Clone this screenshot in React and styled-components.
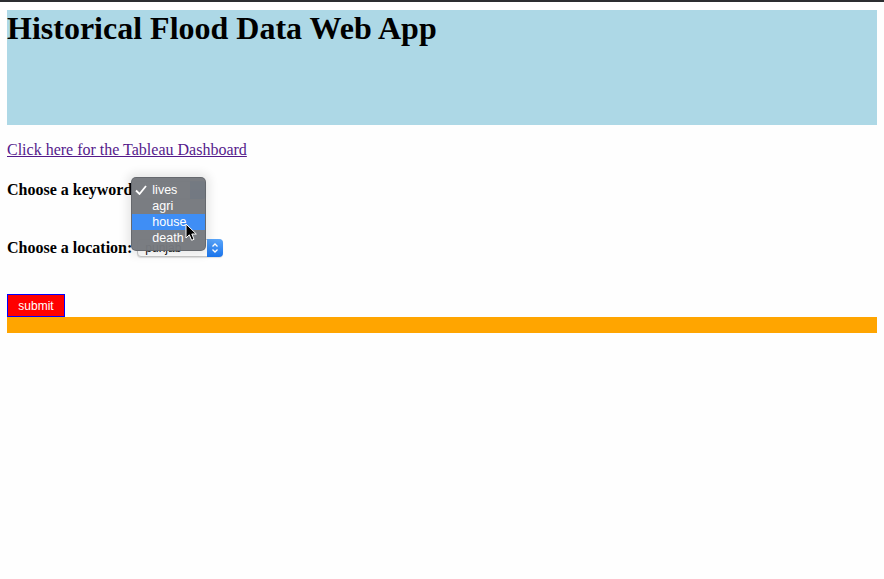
import styled, { createGlobalStyle } from "styled-components"

const GlobalStyle = createGlobalStyle`
  html, body {
    margin: 0;
    padding: 0;
    background: #fefefe;
  }
  body {
    font-family: "Liberation Serif", "Times New Roman", serif;
  }
`

const TopBar = styled.div`
  height: 2px;
  background-color: #2b2d30;
`

const Main = styled.div`
  padding: 8px 7px 0;
`

const Header = styled.div`
  height: 115px;
  background-color: #add8e6;
`

const Title = styled.h1`
  margin: 0;
  font-size: 32px;
  font-weight: bold;
  line-height: 37px;
  color: #000;
`

const LinkLine = styled.p`
  margin: 16px 0;
  font-size: 16px;
  line-height: 18px;
`

const Link = styled.a`
  color: #551a8b;
  text-decoration: underline;
`

const Form = styled.form`
  display: flex;
  flex-direction: column;
  align-items: flex-start;
`

const Row = styled.div`
  display: flex;
  align-items: center;
  height: 30px;
  margin-bottom: ${(p) => p.$gap || 0}px;
`

const Label = styled.label`
  font-size: 16px;
  font-weight: bold;
  color: #000;
  margin-right: ${(p) => p.$space}px;
`

const Field = styled.div`
  position: relative;
`

const Select = styled.div`
  position: relative;
  width: ${(p) => p.$width}px;
  height: 18px;
  box-sizing: border-box;
  border: 1px solid #c9c9c9;
  border-radius: 4px;
  background: #fff;
  box-shadow: 0 1px 1px rgba(0, 0, 0, 0.12);
  font-family: "Liberation Sans", Arial, sans-serif;
  font-size: 12px;
  line-height: 16px;
  padding-left: 7px;
  color: #111;
`

const Stepper = styled.span`
  position: absolute;
  right: -1px;
  top: -1px;
  bottom: -1px;
  width: 16px;
  border-radius: 0 4px 4px 0;
  background: linear-gradient(#5aa6fb, #1a74ec);
  display: flex;
  align-items: center;
  justify-content: center;
`

const Popup = styled.ul`
  position: absolute;
  left: -3px;
  top: -4px;
  width: 75px;
  margin: 0;
  padding: 4px 0;
  list-style: none;
  box-sizing: border-box;
  border-radius: 5px;
  background: rgba(118, 121, 126, 0.97);
  border: 1px solid rgba(90, 92, 96, 0.6);
  box-shadow: 0 0 10px 4px rgba(0, 0, 0, 0.09);
  z-index: 2;
`

const Option = styled.li`
  position: relative;
  height: 16px;
  line-height: 16px;
  padding-left: 20px;
  font-family: "Liberation Sans", Arial, sans-serif;
  font-size: 12.5px;
  color: #fff;
  background: ${(p) => (p.$active ? "#3f8ef5" : "transparent")};
`

const Check = styled.svg`
  position: absolute;
  left: 3px;
  top: 3px;
`

const Cursor = styled.svg`
  position: absolute;
  left: 51px;
  top: 42px;
  z-index: 3;
`

const Button = styled.button`
  width: 58px;
  height: 23px;
  box-sizing: border-box;
  border: 1px solid #0000ff;
  background: #ff0000;
  color: #fff;
  font-family: "Liberation Sans", Arial, sans-serif;
  font-size: 12px;
  padding: 0;
  cursor: pointer;
`

const Footer = styled.div`
  height: 16px;
  background-color: #ffa500;
`

const options = ["lives", "agri", "house", "death"]

export default function App() {
  return (
    <>
      <GlobalStyle />
      <TopBar />
      <Main>
        <Header>
          <Title>Historical Flood Data Web App</Title>
        </Header>
        <LinkLine>
          <Link href="#">Click here for the Tableau Dashboard</Link>
        </LinkLine>
        <Form>
          <Row $gap={28}>
            <Label $space={2}>Choose a keyword</Label>
            <Field>
              <Select $width={72}>
                <Stepper />
              </Select>
              <Popup>
                {options.map((o, i) => (
                  <Option key={o} $active={o === "house"}>
                    {i === 0 && (
                      <Check width="12" height="10" viewBox="0 0 12 10">
                        <path d="M1 5.5 L4.5 9 L11 1" fill="none" stroke="#fff" strokeWidth="1.8" />
                      </Check>
                    )}
                    {o}
                  </Option>
                ))}
              </Popup>
              <Cursor width="13" height="19" viewBox="0 0 13 19">
                <path
                  d="M1 1 L1 15 L4.3 11.8 L6.6 17.3 L9 16.3 L6.8 11 L11.3 11 Z"
                  fill="#000"
                  stroke="#fff"
                  strokeWidth="1"
                  strokeLinejoin="round"
                />
              </Cursor>
            </Field>
          </Row>
          <Row $gap={31}>
            <Label $space={5}>Choose a location:</Label>
            <Select $width={86}>
              punjab
              <Stepper>
                <svg width="8" height="12" viewBox="0 0 8 12">
                  <path d="M1.5 4.5 L4 2 L6.5 4.5 M1.5 7.5 L4 10 L6.5 7.5" fill="none" stroke="#fff" strokeWidth="1.3" />
                </svg>
              </Stepper>
            </Select>
          </Row>
          <Button type="button">submit</Button>
        </Form>
        <Footer />
      </Main>
    </>
  )
}
